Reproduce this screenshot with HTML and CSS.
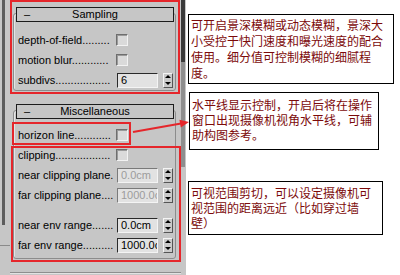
FILE: index.html
```html
<!DOCTYPE html>
<html lang="zh">
<head>
  <meta charset="UTF-8">
  <title>Camera parameters</title>
  <link rel="stylesheet" href="styles.css">
</head>
<body>
  <div class="page">

    <div class="panel">
      <div class="gutter">
        <div class="gutter-bar"></div>
        <div class="gutter-line"></div>
      </div>

      <div class="rollouts">
        <div class="rollout">
          <div class="rollout-head"><span class="dash">–</span><span class="title">Sampling</span></div>
          <div class="rollout-body">
            <div class="row">
              <span class="label">depth-of-field.........</span>
              <span class="check"></span>
            </div>
            <div class="row">
              <span class="label">motion blur............</span>
              <span class="check"></span>
            </div>
            <div class="row">
              <span class="label">subdivs..................</span>
              <span class="field">6</span>
              <span class="spin"><i class="up"></i><i class="down"></i></span>
            </div>
          </div>
        </div>

        <div class="rollout misc">
          <div class="rollout-head"><span class="dash">–</span><span class="title">Miscellaneous</span></div>
          <div class="rollout-body">
            <div class="row">
              <span class="label">horizon line............</span>
              <span class="check"></span>
            </div>
            <div class="row">
              <span class="label">clipping..................</span>
              <span class="check"></span>
            </div>
            <div class="row">
              <span class="label">near clipping plane.</span>
              <span class="field disabled">0.0cm</span>
              <span class="spin"><i class="up"></i><i class="down"></i></span>
            </div>
            <div class="row">
              <span class="label">far clipping plane....</span>
              <span class="field disabled">1000.0cm</span>
              <span class="spin"><i class="up"></i><i class="down"></i></span>
            </div>
            <div class="row spaced">
              <span class="label">near env range.......</span>
              <span class="field">0.0cm</span>
              <span class="spin"><i class="up"></i><i class="down"></i></span>
            </div>
            <div class="row">
              <span class="label">far env range..........</span>
              <span class="field">1000.0cm</span>
              <span class="spin"><i class="up"></i><i class="down"></i></span>
            </div>
          </div>
        </div>

        <div class="panel-foot"></div>
      </div>

      <div class="scroll">
        <div class="thumb"></div>
        <div class="track"></div>
      </div>
    </div>

    <div class="notes">
      <div class="note note-sampling">可开启景深模糊或动态模糊，景深大<br>小受控于快门速度和曝光速度的配合<br>使用。细分值可控制模糊的细腻程<br>度。</div>
      <div class="note note-horizon">水平线显示控制，开启后将在操作<br>窗口出现摄像机视角水平线，可辅<br>助构图参考。</div>
      <div class="note note-clip">可视范围剪切，可以设定摄像机可<br>视范围的距离远近（比如穿过墙<br>壁）</div>
    </div>

    <!-- red highlight frames drawn over the panel -->
    <div class="mark mark-sampling"></div>
    <div class="mark mark-horizon"></div>
    <div class="mark mark-clip"></div>
    <svg class="arrow" width="62" height="26" viewBox="0 0 62 26">
      <line x1="3" y1="20" x2="51" y2="11.6" stroke="#e5262b" stroke-width="2"/>
      <polygon points="59,10 50.8,15.5 49.4,7.7" fill="#e5262b"/>
    </svg>

  </div>
</body>
</html>
```

FILE: styles.css
```css
body {
  margin: 0;
  background-color: #fff;
  font-family: "Liberation Sans", Arial, sans-serif;
  font-size: 11px;
  color: #000;
}

.page {
  position: relative;
  display: flex;
  width: 400px;
  height: 275px;
  overflow: hidden;
}

/* left command panel */
.panel {
  display: flex;
  width: 186px;
  height: 275px;
  background-color: #c6c6c6;
}

.gutter {
  width: 10px;
  display: flex;
  flex-direction: column;
}

.gutter-bar {
  width: 3px;
  height: 225px;
  margin-left: 2px;
  background-color: #5c5c5c;
}

.gutter-line {
  height: 1px;
  margin-top: 20px;
  background-color: #8a8a8a;
}

.rollouts {
  width: 171px;
  padding: 0 5px 0 3px;
  box-sizing: border-box;
}

.rollout {
  margin-top: 13px;
  border: 1px solid #8c8c8c;
  border-radius: 3px;
  box-shadow: inset 1px 1px 0 #e4e4e4;
}

.rollout.misc {
  margin-top: 19px;
}

.rollout-head {
  display: grid;
  grid-template-columns: 22px 1fr 22px;
  align-items: center;
  height: 13px;
  margin: -7px 1px 0 2px;
  border: 1px solid #1c1c1c;
  background-color: #c6c6c6;
  font-size: 11px;
  line-height: 13px;
}

.rollout-head .dash {
  padding-left: 7px;
}

.rollout-head .title {
  text-align: center;
}

.rollout-body {
  padding: 8px 0 0 4px;
}

.misc .rollout-body {
  padding: 6px 0 3px 4px;
}

.row {
  display: flex;
  align-items: center;
  height: 20px;
}

.row.spaced {
  margin-top: 10px;
}

.label {
  width: 96px;
  margin-right: 2px;
  overflow: hidden;
  white-space: nowrap;
}

.check {
  width: 10px;
  height: 10px;
  border: 1px solid;
  border-color: #6e6e6e #f2f2f2 #f2f2f2 #6e6e6e;
  box-shadow: inset 1px 1px 0 #9a9a9a;
  background-color: #dadada;
}

.field {
  width: 36px;
  height: 13px;
  margin-left: 1px;
  padding-left: 3px;
  border: 1px solid;
  border-color: #2a2a2a #f4f4f4 #f4f4f4 #2a2a2a;
  background-color: #e2e2e2;
  line-height: 13px;
  overflow: hidden;
  white-space: nowrap;
}

.field.disabled {
  color: #9c9c9c;
  border-color: #7a7a7a #f4f4f4 #f4f4f4 #7a7a7a;
}

.spin {
  display: flex;
  flex-direction: column;
  width: 8px;
  height: 13px;
  margin-left: 5px;
  border: 1px solid;
  border-color: #f4f4f4 #555 #555 #f4f4f4;
  background-color: #cacaca;
}

.spin i {
  flex: 1;
  display: flex;
  justify-content: center;
  align-items: center;
}

.spin i::after {
  content: "";
  border-left: 3px solid transparent;
  border-right: 3px solid transparent;
}

.spin .up::after {
  border-bottom: 3px solid #000;
}

.spin .down::after {
  border-top: 3px solid #000;
}

.panel-foot {
  height: 1px;
  margin: 13px -5px 0 -3px;
  background-color: #8e8e8e;
  box-shadow: 0 1px 0 #e2e2e2;
}

.scroll {
  width: 4px;
  margin-right: 1px;
  display: flex;
  flex-direction: column;
}

.scroll .thumb {
  height: 62px;
  background-color: #3a3a3a;
}

.scroll .track {
  height: 105px;
  background-color: #8e8e8e;
}

/* right hand notes */
.notes {
  display: flex;
  flex-direction: column;
  align-items: flex-start;
  padding-left: 2px;
}

.note {
  border: 1px solid #000;
  color: #7c0a0a;
  font-family: "Noto Sans CJK SC", "Noto Sans", sans-serif;
  font-size: 12px;
  line-height: 15px;
  white-space: nowrap;
  box-sizing: border-box;
}

.note-sampling {
  width: 206px;
  margin-top: 14px;
  padding: 2px;
  line-height: 16px;
}

.note-horizon {
  width: 190px;
  margin: 8px 0 0 1px;
  padding: 4px 2px 7px 2px;
}

.note-clip {
  width: 195px;
  margin-top: 31px;
  padding: 3px 2px 4px 2px;
}

/* red highlight frames */
.mark {
  position: absolute;
  border: 2px solid #e5262b;
  box-sizing: border-box;
}

.mark-sampling {
  left: 10px;
  top: 0;
  width: 170px;
  height: 94px;
}

.mark-horizon {
  left: 12px;
  top: 122px;
  width: 119px;
  height: 23px;
}

.mark-clip {
  left: 11px;
  top: 146px;
  width: 170px;
  height: 116px;
}

.arrow {
  position: absolute;
  left: 130px;
  top: 112px;
}
```
